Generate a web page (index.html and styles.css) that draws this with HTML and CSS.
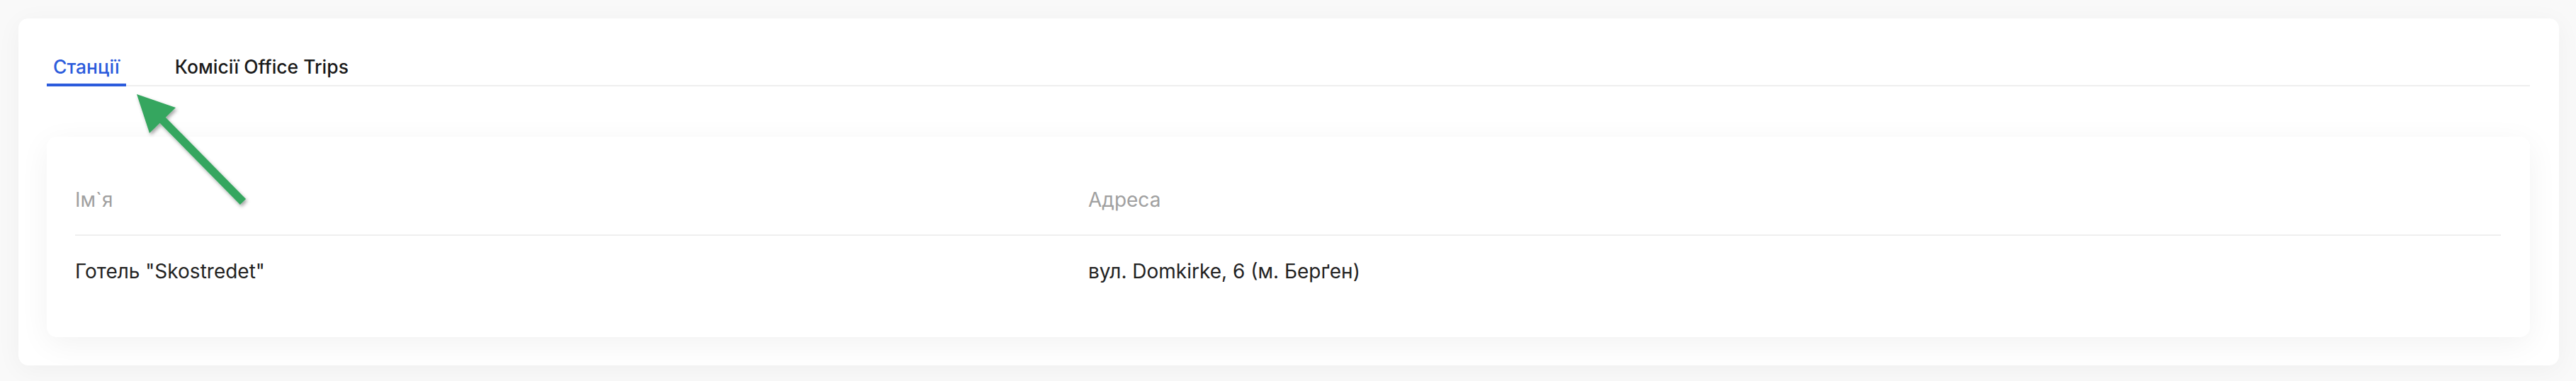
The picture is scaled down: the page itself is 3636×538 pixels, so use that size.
FILE: index.html
```html
<!DOCTYPE html>
<html lang="uk">
<head>
<meta charset="utf-8">
<title>Станції</title>
<link rel="stylesheet" href="styles.css">
</head>
<body>
<div class="page">
  <section class="panel">
    <nav class="tabs">
      <div class="tab active">Станції</div>
      <div class="tab">Комісії Office Trips</div>
    </nav>
    <div class="card">
      <div class="table">
        <div class="row head">
          <div class="cell">Ім`я</div>
          <div class="cell">Адреса</div>
        </div>
        <div class="row body-row">
          <div class="cell">Готель "Skostredet"</div>
          <div class="cell">вул. Domkirke, 6 (м. Берґен)</div>
        </div>
      </div>
    </div>
  </section>
  <svg class="arrow" width="400" height="320" viewBox="0 0 400 320" aria-hidden="true">
    <defs>
      <filter id="sh" x="-20%" y="-20%" width="140%" height="140%">
        <feDropShadow dx="2" dy="3" stdDeviation="2.5" flood-color="#000" flood-opacity="0.35"/>
      </filter>
    </defs>
    <g filter="url(#sh)" fill="#35a65e" stroke="none">
      <line x1="226" y1="166" x2="343" y2="285" stroke="#35a65e" stroke-width="11.5"/>
      <polygon points="193,133 248,152 211,188"/>
    </g>
  </svg>
</div>
</body>
</html>
```
FILE: styles.css
```css
* { box-sizing: border-box; }
html, body { margin: 0; padding: 0; }
body {
  background: #f9f9f9;
  font-family: Inter, "Noto Sans", "Liberation Sans", sans-serif;
  font-size: 28px;
  color: #1f1f1f;
}
.page {
  position: relative;
  width: 3636px;
  height: 538px;
  padding: 26px 24px 22px 26px;
}
.panel {
  background: #fff;
  border-radius: 14px;
  padding: 40px 41px 40px 40px;
  box-shadow: 0 6px 36px rgba(0, 0, 0, 0.045);
}
.tabs {
  display: flex;
  gap: 60px;
  border-bottom: 2px solid #eeeeee;
}
.tab {
  padding: 8px 9px 4px;
  font-size: 26.5px;
  font-weight: 500;
  line-height: 40px;
  margin-bottom: -2px;
  border-bottom: 4px solid transparent;
  color: #1a1a1a;
  white-space: nowrap;
}
.tab.active {
  color: #2b5bdc;
  border-bottom-color: #2b5bdc;
}
.card {
  margin-top: 71px;
  background: #fff;
  border-radius: 14px;
  padding: 40px 41px 42px 40px;
  box-shadow: 0 10px 44px rgba(0, 0, 0, 0.055);
}
.row {
  display: grid;
  grid-template-columns: 1430px 1fr;
  line-height: 40px;
}
.row.head {
  color: #a0a0a0;
  border-bottom: 2px solid #efefef;
}
.row.head .cell { padding: 29px 0; }
.row.body-row .cell { padding: 30px 0 31px; color: #222; }
.arrow {
  position: absolute;
  left: 0;
  top: 0;
  pointer-events: none;
}
```
